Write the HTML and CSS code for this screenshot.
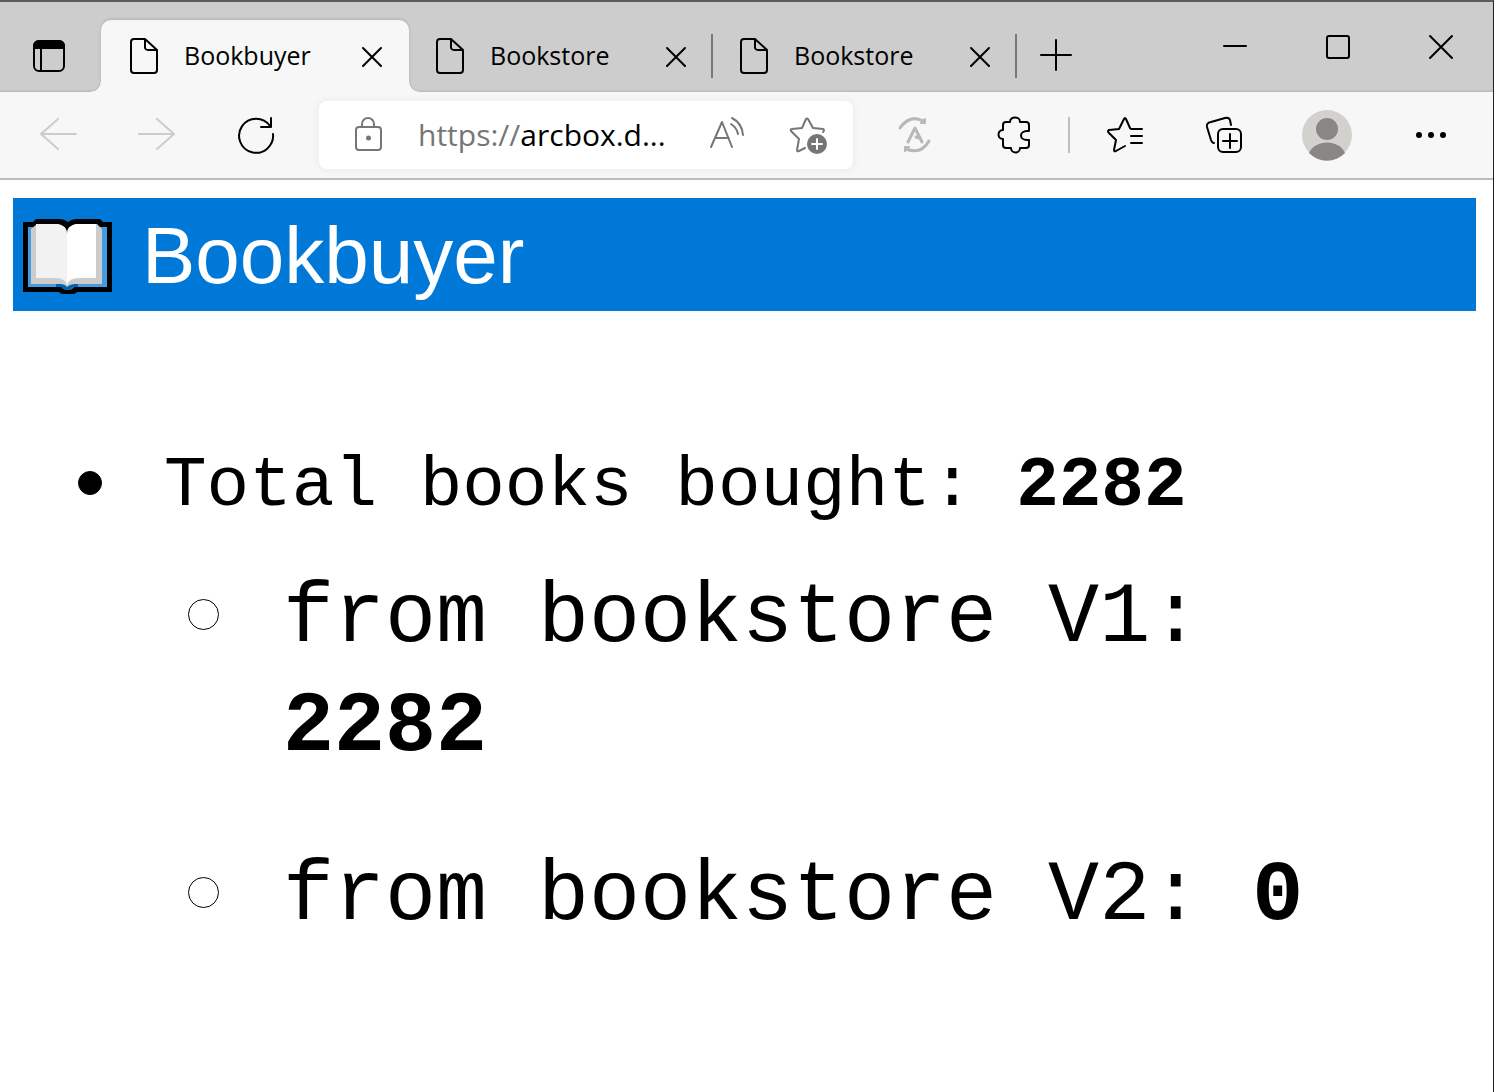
FILE: index.html
```html
<!DOCTYPE html>
<html lang="en">
<head>
<meta charset="utf-8">
<meta name="viewport" content="width=device-width, initial-scale=1">
<title>Bookbuyer</title>
<link rel="stylesheet" href="styles.css">
</head>
<body>
<svg class="symbols" aria-hidden="true">
  <symbol id="page" viewBox="0 0 28 36"><path d="M4 1h11l12 11v20a3 3 0 0 1-3 3H4a3 3 0 0 1-3-3V4a3 3 0 0 1 3-3zM15 1v9a3 3 0 0 0 3 2h9"/></symbol>
  <symbol id="cross" viewBox="0 0 20 22"><path d="M1 3l18 18M19 3L1 21"/></symbol>
</svg>
<div class="window">
  <header class="strip">
    <button class="tab-actions" aria-label="Tab actions">
      <svg class="icon" width="32" height="32" viewBox="0 0 32 32"><rect x="1" y="1" width="30" height="30" rx="5"/><path d="M8 8v23"/><path class="solid" d="M1 8V6a5 5 0 0 1 5-5h20a5 5 0 0 1 5 5v2z"/></svg>
    </button>
    <nav class="tabs" aria-label="Tabs">
      <div class="tab active">
        <svg class="icon" width="28" height="36"><use href="#page"/></svg>
        <a href="#bookbuyer">Bookbuyer</a>
        <button aria-label="Close tab"><svg class="icon" width="20" height="22"><use href="#cross"/></svg></button>
      </div>
      <div class="tab">
        <svg class="icon" width="28" height="36"><use href="#page"/></svg>
        <a href="#bookstore-1">Bookstore</a>
        <button aria-label="Close tab"><svg class="icon" width="20" height="22"><use href="#cross"/></svg></button>
      </div>
      <div class="tab">
        <svg class="icon" width="28" height="36"><use href="#page"/></svg>
        <a href="#bookstore-2">Bookstore</a>
        <button aria-label="Close tab"><svg class="icon" width="20" height="22"><use href="#cross"/></svg></button>
      </div>
    </nav>
    <button class="new-tab" aria-label="New tab"><svg class="icon" width="32" height="32" viewBox="0 0 32 32"><path d="M16 1v30M1 16h30"/></svg></button>
    <div class="controls">
      <button aria-label="Minimize"><svg class="icon" width="24" height="24" viewBox="0 0 24 24"><path d="M0 11h22"/></svg></button>
      <button aria-label="Maximize"><svg class="icon" width="24" height="24" viewBox="0 0 24 24"><rect x="0" y="1" width="22" height="22" rx="2"/></svg></button>
      <button aria-label="Close"><svg class="icon" width="24" height="24" viewBox="0 0 24 24"><path d="M0 1l22 22M22 1L0 23"/></svg></button>
    </div>
  </header>

  <div class="toolbar">
    <button class="tool faint" aria-label="Back"><svg class="icon" width="36" height="32" viewBox="0 0 36 32"><path d="M18 0L1 15l17 15M1 15h35"/></svg></button>
    <button class="tool faint" aria-label="Forward"><svg class="icon" width="36" height="32" viewBox="0 0 36 32"><path d="M18 0l17 15-17 15M35 15H0"/></svg></button>
    <button class="tool" aria-label="Refresh"><svg class="icon" width="36" height="38" viewBox="0 0 36 38"><path d="M35 18A17 17 0 1 1 32 10M33 2v9H23"/></svg></button>
    <div class="address">
      <svg class="icon grey" width="28" height="36" viewBox="0 0 28 36"><rect x="1" y="10" width="25" height="23" rx="3"/><path d="M7 10V7a6 6 0 0 1 12 0v3"/><circle class="solid" cx="13.500" cy="21" r="1.500"/></svg>
      <div class="url"><label for="url">https://</label><input id="url" type="text" value="arcbox.d..."></div>
      <button class="grey" aria-label="Read aloud"><svg class="icon" width="36" height="36" viewBox="0 0 36 36"><path d="M1 30L12 5l10 25M5 21h14M21 7q6 4 7 10M22 1q10 5 11 17"/></svg></button>
      <button class="grey" aria-label="Add to favorites"><svg class="icon" width="40" height="40" viewBox="0 0 40 40"><path d="M17 33l-6 3q-2 1-2-1l2-11-8-8q-1-2 1-2l10-1 4-9q1-1 2 0l5 9 10 1q2 1 0 3"/><circle class="solid" cx="29" cy="29" r="9"/><path class="plus" d="M29 24v10M24 29h10"/></svg></button>
    </div>
    <button class="tool pale" aria-label="Sync"><svg class="icon" width="32" height="38" viewBox="0 0 32 38"><path class="thick" d="M1 12Q11-2 24 5M30 25Q22 39 7 33"/><path class="solid" d="M26 3v4h-4zM6 35v-4h4z"/><path class="thick" d="M9 26l7-14 7 14M17 21l3 1"/></svg></button>
    <button class="tool" aria-label="Extensions"><svg class="icon" width="34" height="38" viewBox="0 0 34 38"><path d="M9 6h4C13 0 23 0 23 6h6q3 0 3 3v6h-2c-8 0-8 9 0 9h2v5q0 3-3 3h-6c0 6-9 6-9 0H9q-3 0-3-3v-6c-6 0-6-9 0-9V9q0-3 3-3z"/></svg></button>
    <span class="divider"></span>
    <button class="tool" aria-label="Favorites"><svg class="icon" width="36" height="38" viewBox="0 0 36 38"><path d="M23 12L19 3q-1-2-2 0l-5 10-10 1q-2 1 0 3l7 7-2 10q0 2 2 1l9-5M24 13h11M24 20h11M24 27h11"/></svg></button>
    <button class="tool" aria-label="Collections"><svg class="icon" width="36" height="38" viewBox="0 0 36 38"><rect x="12" y="13" width="23" height="23" rx="5"/><path d="M24 18v14M17 25h14M25 9l-1-5q-1-3-5-2L5 6Q0 7 1 11l4 13q1 3 3 3"/></svg></button>
    <button class="tool profile" aria-label="Profile"><svg width="52" height="52" viewBox="0 0 52 52"><circle cx="26" cy="26" r="25" fill="#d2d1ce"/><circle cx="26" cy="20" r="11" fill="#8a8684"/><path d="M8 44C14 30 38 30 44 44A25 25 0 0 1 8 44z" fill="#8a8684"/></svg></button>
    <button class="tool more" aria-label="Settings and more"><svg width="30" height="8" viewBox="0 0 30 8"><circle cx="3" cy="4" r="3"/><circle cx="15" cy="4" r="3"/><circle cx="27" cy="4" r="3"/></svg></button>
  </div>

  <main class="content">
    <h1 class="banner">
      <svg width="90" height="76" viewBox="0 0 90 76" aria-hidden="true">
        <path d="M0 4h10l3-3h24q4 0 8 3 4-3 8-3h24l3 3h9v70H54q-3 3-9 3t-9-3H0z"/>
        <path fill="#429ce3" d="M5 9h79v60H51q-2 3-6 3t-6-3H5z"/>
        <path fill="#0063b1" d="M33 66h22v3h-5q-2 3-6 3t-6-3h-5z"/>
        <path fill="#ccc" d="M8 11l6-5h22l8 5 8-5h22l5 5v55H52q-5 0-8 3-2-3-7-3H8z"/>
        <path d="M35 6q9 2 9 10 0-8 9-10l-9 2z"/>
        <path fill="#f2f2f2" d="M13 6h21q10 1 10 10v51q-2-7-11-7H13z"/>
        <path fill="#fff" d="M73 6H54q-10 1-10 10v51q2-7 11-7h18z"/>
      </svg>
      <span>Bookbuyer</span>
    </h1>
    <ul class="totals">
      <li>
        <p>Total books bought: <strong>2282</strong></p>
        <ul class="sources">
          <li>from bookstore V1: <strong>2282</strong></li>
          <li>from bookstore V2: <strong>0</strong></li>
        </ul>
      </li>
    </ul>
  </main>
</div>
</body>
</html>
```
FILE: styles.css
```css
*,
*::before,
*::after { box-sizing: border-box; }

body {
  margin: 0;
  background: #fff;
  color: #000;
  font-family: "Open Sans", "Noto Sans", sans-serif;
}

button {
  display: flex;
  align-items: center;
  justify-content: center;
  flex: none;
  margin: 0;
  padding: 0;
  border: 0;
  background: none;
  color: inherit;
}

.symbols { display: none; }

.icon {
  flex: none;
  overflow: visible;
  fill: none;
  stroke: currentColor;
  stroke-width: 2;
  stroke-linecap: round;
  stroke-linejoin: round;
}

.solid { fill: currentColor; }
.thick { stroke-width: 3; }
.plus { stroke: #fff; }

.window {
  min-height: 100vh;
  border-top: 2px solid #5c5c5c;
  border-right: 1px solid #1c2424;
}

/* Tab strip */
.strip {
  display: flex;
  height: 90px;
  background: #cdcdcd;
  box-shadow: inset 0 -2px 2px -1px #b4b4b4;
}

.tab-actions { width: 97px; padding-top: 18px; }

.tabs {
  display: flex;
  padding: 18px 0 0 4px;
}

.tab {
  position: relative;
  display: flex;
  align-items: center;
  width: 304px;
  padding: 0 27px;
}

.tab:not(.active)::after {
  content: "";
  position: absolute;
  right: 0;
  width: 2px;
  height: 44px;
  background: #777;
}

.tab a {
  flex: 1;
  padding: 0 0 2px 26px;
  color: inherit;
  font-size: 25px;
  line-height: 34px;
  text-decoration: none;
}

.tab.active {
  width: 308px;
  padding: 0 27px 0 29px;
  border-radius: 10px 10px 0 0;
  background: #f7f7f7;
  box-shadow: 0 -1px 3px #b0b0b0;
  clip-path: inset(-4px -10px 0);
}

.tab.active::before,
.tab.active::after {
  content: "";
  position: absolute;
  bottom: 0;
  width: 10px;
  height: 10px;
}

.tab.active::before {
  left: -10px;
  background: radial-gradient(circle at 0 0, #cdcdcd 8px, #b8b8b8 9px, #f7f7f7 10px);
}

.tab.active::after {
  right: -10px;
  background: radial-gradient(circle at 100% 0, #cdcdcd 8px, #b8b8b8 9px, #f7f7f7 10px);
}

.new-tab { width: 78px; padding-top: 16px; }

.controls { display: flex; margin-left: auto; }
.controls button { width: 103px; }

/* Toolbar */
.toolbar {
  display: flex;
  align-items: center;
  height: 88px;
  padding: 0 10px 0 8px;
  border-bottom: 2px solid #bdbdbd;
  background: #f7f7f7;
}

.tool { width: 99px; height: 68px; }
.faint { color: #ccc; }
.pale { color: #b8b8b8; }
.grey { color: #767676; }
.profile { width: 108px; }
.more { width: 100px; margin-right: 2px; }

.divider {
  width: 2px;
  height: 36px;
  margin: 0 5px;
  background: #bdbdbd;
}

.address {
  display: flex;
  flex: 1;
  align-items: center;
  min-width: 0;
  height: 68px;
  margin: 0 12px 0 14px;
  padding: 0 25px 0 36px;
  border-radius: 8px;
  background: #fff;
  box-shadow: 0 0 8px #e8e8e8;
}

.address button + button { margin-left: 42px; }

.url {
  display: flex;
  flex: 1;
  min-width: 0;
  padding-left: 35px;
  font-size: 30px;
  line-height: 40px;
}

.url label { color: #767676; }

.url input {
  flex: 1;
  width: 0;
  min-width: 0;
  padding: 0;
  border: 0;
  outline: 0;
  background: none;
  color: #000;
  font: inherit;
}

/* Page */
.content { padding: 18px 17px 0 13px; }

.banner {
  display: flex;
  align-items: center;
  gap: 29px;
  height: 113px;
  margin: 0;
  padding: 2px 10px 0;
  background: #0078d7;
  color: #fff;
  font: 400 80px/112px "Liberation Sans", Arial, sans-serif;
}

.totals,
.sources {
  margin: 0;
  padding: 0;
  list-style: none;
}

.totals {
  padding: 133px 40px 0 151px;
  font: 71px/84px "Liberation Mono", Consolas, monospace;
}

.totals li { position: relative; }
.totals p { margin: 0; }

.totals > li::before,
.sources > li::before {
  content: "";
  position: absolute;
  border: 1px solid #000;
  border-radius: 50%;
}

.totals > li::before {
  top: 27px;
  left: -86px;
  width: 24px;
  height: 24px;
  background: #000;
}

.sources {
  display: grid;
  gap: 60px;
  padding: 36px 0 0 119px;
  font-size: 85px;
  line-height: 109px;
}

.sources > li::before {
  top: 35px;
  left: -95px;
  width: 31px;
  height: 31px;
}
```
